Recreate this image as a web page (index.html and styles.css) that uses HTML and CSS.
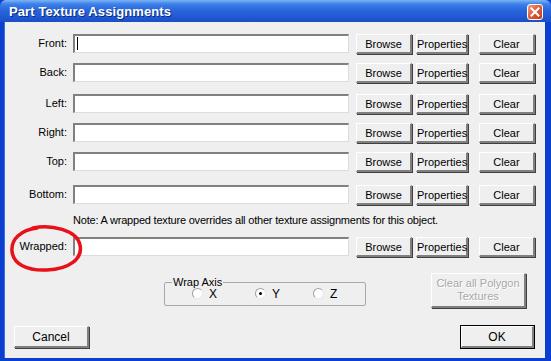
FILE: index.html
```html
<!DOCTYPE html>
<html lang="en">
<head>
  <meta charset="UTF-8">
  <title>Part Texture Assignments</title>
  <link rel="stylesheet" href="styles.css">
</head>
<body>
  <div class="window">
    <header class="titlebar">
      <span class="title">Part Texture Assignments</span>
      <button class="close-button">
        <svg width="10" height="10" viewBox="0 0 10 10"><path d="M1.5 1.5 L8.5 8.5 M8.5 1.5 L1.5 8.5" stroke="#fff" stroke-width="2" stroke-linecap="square"/></svg>
      </button>
    </header>

    <div class="dialog-body">
      <div class="row">
        <label class="row-label">Front:</label>
        <div class="textbox"><span class="caret"></span></div>
        <button class="btn btn-browse">Browse</button>
        <button class="btn btn-props">Properties</button>
        <button class="btn btn-clear">Clear</button>
      </div>
      <div class="row">
        <label class="row-label">Back:</label>
        <div class="textbox"></div>
        <button class="btn btn-browse">Browse</button>
        <button class="btn btn-props">Properties</button>
        <button class="btn btn-clear">Clear</button>
      </div>
      <div class="row row-wide">
        <label class="row-label">Left:</label>
        <div class="textbox"></div>
        <button class="btn btn-browse">Browse</button>
        <button class="btn btn-props">Properties</button>
        <button class="btn btn-clear">Clear</button>
      </div>
      <div class="row">
        <label class="row-label">Right:</label>
        <div class="textbox"></div>
        <button class="btn btn-browse">Browse</button>
        <button class="btn btn-props">Properties</button>
        <button class="btn btn-clear">Clear</button>
      </div>
      <div class="row">
        <label class="row-label">Top:</label>
        <div class="textbox"></div>
        <button class="btn btn-browse">Browse</button>
        <button class="btn btn-props">Properties</button>
        <button class="btn btn-clear">Clear</button>
      </div>
      <div class="row row-wider">
        <label class="row-label">Bottom:</label>
        <div class="textbox"></div>
        <button class="btn btn-browse">Browse</button>
        <button class="btn btn-props">Properties</button>
        <button class="btn btn-clear">Clear</button>
      </div>

      <p class="note">Note: A wrapped texture overrides all other texture assignments for this object.</p>

      <div class="row row-wrapped">
        <label class="row-label">Wrapped:</label>
        <div class="textbox"></div>
        <button class="btn btn-browse">Browse</button>
        <button class="btn btn-props">Properties</button>
        <button class="btn btn-clear">Clear</button>
        <svg class="circle-mark" width="76" height="50" viewBox="0 0 76 50">
          <path d="M24 4 C42 0 68 6 71 21 C74 35 60 45 38 46 C18 47 4 40 3 27 C2 15 12 6 28 4" fill="none" stroke="#e8101a" stroke-width="3.5" stroke-linecap="round"/>
        </svg>
      </div>

      <div class="axis-row">
        <fieldset class="groupbox">
          <legend>Wrap Axis</legend>
          <label class="radio"><span class="radio-dot"></span>X</label>
          <label class="radio"><span class="radio-dot checked"></span>Y</label>
          <label class="radio"><span class="radio-dot"></span>Z</label>
        </fieldset>
        <button class="btn btn-disabled">Clear all Polygon<br>Textures</button>
      </div>

      <div class="footer">
        <button class="btn btn-action">Cancel</button>
        <button class="btn btn-action btn-default">OK</button>
      </div>
    </div>
  </div>
</body>
</html>
```

FILE: styles.css
```css
:root {
  --face: #efefef;
  --shadow: #808080;
  --shade: #a0a0a0;
  --light: #ffffff;
  --text: #000000;
  --frame: #0a3fd0;
}

* {
  margin: 0;
  padding: 0;
  box-sizing: border-box;
}

body {
  background: var(--face);
  font-family: "Liberation Sans", Arial, sans-serif;
  font-size: 11px;
  color: var(--text);
}

.window {
  width: 551px;
  height: 361px;
  display: flex;
  flex-direction: column;
  background: var(--face);
  border-left: 4px solid var(--frame);
  border-right: 6px solid var(--frame);
  border-bottom: 3px solid var(--frame);
  box-shadow: inset 1px 0 0 #3a6fe0;
}

.titlebar {
  height: 22px;
  margin: 0 -6px 0 -4px;
  padding: 0 8px 0 9px;
  display: flex;
  align-items: center;
  justify-content: space-between;
  background: linear-gradient(#7eb4f4 0%, #3d82ea 18%, #2a66dc 45%, #2259d4 75%, #1b4ec6 100%);
  border-top-left-radius: 6px;
  border-top-right-radius: 6px;
}

.title {
  font-weight: bold;
  font-size: 13px;
  color: #fff;
  text-shadow: 1px 1px 0 #0a2a7a;
  letter-spacing: 0.1px;
}

.close-button {
  width: 16px;
  height: 16px;
  border: 1px solid #fff;
  border-radius: 3px;
  background: linear-gradient(135deg, #f0a080 0%, #e06040 45%, #c83818 100%);
  display: flex;
  align-items: center;
  justify-content: center;
  margin-top: 1px;
}

.dialog-body {
  flex: 1;
  padding: 12px 0 0 0;
  display: flex;
  flex-direction: column;
}

.row {
  display: flex;
  align-items: flex-start;
  height: 20px;
  position: relative;
}

.row + .row {
  margin-top: 9px;
}

.row.row-wide {
  margin-top: 11px;
}

.row.row-wider {
  margin-top: 13px;
}

.row-label {
  width: 63px;
  text-align: right;
  line-height: 19px;
}

.textbox {
  width: 276px;
  height: 19px;
  margin-left: 6px;
  background: #fff;
  border-top: 2px solid var(--shadow);
  border-left: 2px solid var(--shadow);
  border-right: 1px solid #dcdcdc;
  border-bottom: 1px solid #dcdcdc;
  padding: 1px 2px;
}

.caret {
  display: block;
  width: 1px;
  height: 13px;
  background: #000;
}

.btn {
  height: 20px;
  background: var(--face);
  font-family: "Liberation Sans", Arial, sans-serif;
  font-size: 11px;
  color: var(--text);
  border-top: 1px solid var(--light);
  border-left: 1px solid var(--light);
  border-right: 2px solid var(--shadow);
  border-bottom: 2px solid var(--shadow);
  box-shadow: 1px 1px 0 #404040;
  line-height: 16px;
}

.btn-browse {
  width: 56px;
  margin-left: 7px;
}

.btn-props {
  width: 52px;
  margin-left: 4px;
}

.btn-clear {
  width: 56px;
  margin-left: 11px;
}

.note {
  margin: 8px 0 0 69px;
  line-height: 14px;
  letter-spacing: -0.2px;
}

.row.row-wrapped {
  margin-top: 10px;
}

.circle-mark {
  position: absolute;
  left: 5px;
  top: -13px;
}

.axis-row {
  display: flex;
  align-items: flex-start;
  margin-top: 16px;
  height: 37px;
}

.groupbox {
  width: 202px;
  height: 29px;
  margin: 4px 0 0 160px;
  border: 1px solid #a8a8a8;
  border-radius: 2px;
  display: flex;
  align-items: center;
  padding: 0 0 2px 27px;
}

.groupbox legend {
  padding: 0 1px;
  margin-left: -20px;
  line-height: 11px;
}

.radio {
  display: flex;
  align-items: center;
  width: 63px;
  font-size: 12px;
  margin-top: -4px;
}

.radio:nth-of-type(3) {
  width: 40px;
  margin-left: -5px;
}

.radio-dot {
  width: 11px;
  height: 11px;
  border-radius: 50%;
  background: #fff;
  border: 1px solid;
  border-color: var(--shade) #e8e8e8 #e8e8e8 var(--shade);
  margin-right: 6px;
  position: relative;
}

.radio-dot.checked::after {
  content: "";
  position: absolute;
  left: 3px;
  top: 3px;
  width: 3px;
  height: 3px;
  border-radius: 50%;
  background: #000;
}

.btn-disabled {
  width: 95px;
  height: 35px;
  margin-left: 65px;
  color: #a8a8a8;
  text-shadow: 1px 1px 0 #fff;
  line-height: 13px;
}

.footer {
  display: flex;
  justify-content: space-between;
  padding: 0 10px 0 10px;
  margin-top: 16px;
}

.btn-action {
  width: 75px;
  height: 22px;
  font-size: 12px;
}

.btn-default {
  outline: 1px solid #000;
  width: 73px;
  margin-right: 1px;
}
```
